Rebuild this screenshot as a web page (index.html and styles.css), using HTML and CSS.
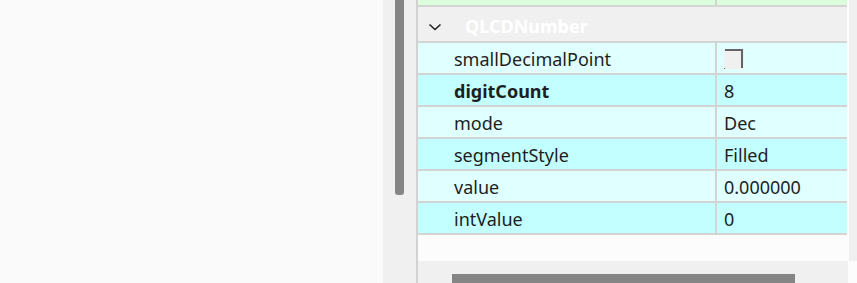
FILE: index.html
```html
<!DOCTYPE html>
<html lang="en">

<head>
	<meta charset="UTF-8">
	<title>Property Editor</title>
	<link rel="stylesheet" href="styles.css">
</head>

<body>
	<div class="page">
		<div class="canvas"></div>
		<div class="vtrack">
			<span class="vthumb"></span>
		</div>
		<div class="panel">
			<div class="panel-top">
				<div class="props">
					<div class="row green"><span class="key"></span><span class="val"></span></div>
					<div class="group">
						<svg class="chev" width="14" height="8" viewBox="0 0 14 8">
							<path d="M1.5 1.5 L7 6.5 L12.5 1.5" fill="none" stroke="#222" stroke-width="1.6" />
						</svg>
						<span>QLCDNumber</span>
					</div>
					<div class="row light"><span class="key">smallDecimalPoint</span><span class="val">
						<svg class="check" width="20" height="20" viewBox="0 0 20 20">
							<rect x="0" y="0" width="20" height="20" fill="#f0f0f0" />
							<path d="M1 1 H18 V19" fill="none" stroke="#646464" stroke-width="2" />
							<rect x="0" y="19" width="1" height="1" fill="#646464" />
						</svg>
					</span></div>
					<div class="row dark"><span class="key bold">digitCount</span><span class="val">8</span></div>
					<div class="row light"><span class="key">mode</span><span class="val">Dec</span></div>
					<div class="row dark"><span class="key">segmentStyle</span><span class="val">Filled</span></div>
					<div class="row light"><span class="key">value</span><span class="val">0.000000</span></div>
					<div class="row dark"><span class="key">intValue</span><span class="val">0</span></div>
				</div>
				<div class="side"></div>
			</div>
			<div class="htrack">
				<span class="hthumb"></span>
			</div>
		</div>
	</div>
</body>

</html>
```

FILE: styles.css
```css
* {
	margin: 0;
	padding: 0;
	box-sizing: border-box;
}

body {
	background: #fcfcfc;
	font-family: "Noto Sans", "Open Sans", sans-serif;
	font-size: 18px;
	color: #1e1e1e;
	overflow: hidden;
}

.page {
	display: flex;
	height: 283px;
}

.canvas {
	width: 383px;
	background: #fafafa;
}

.vtrack {
	width: 35px;
	background: #f0f0f0;
	border-right: 2px solid #d2d2d2;
	padding-left: 12px;
}
.vtrack .vthumb {
	display: block;
	width: 9px;
	height: 195px;
	background: #858585;
	border-radius: 0 0 3px 3px;
}

.panel {
	width: 439px;
	flex: 1;
	display: flex;
	flex-direction: column;
}

.panel-top {
	display: flex;
	height: 264px;
}

.props {
	width: 429px;
	display: flex;
	flex-direction: column;
	gap: 2px;
	align-self: flex-start;
	background: #d4d4d4;
	padding-bottom: 2px;
}

.side {
	width: 8px;
	margin-left: 2px;
	background: #f0f0f0;
}

.row {
	display: grid;
	grid-template-columns: 297px 130px;
	column-gap: 2px;
	height: 30px;
}
.row span {
	display: flex;
	align-items: center;
	white-space: nowrap;
	padding-top: 2px;
}
.row .key {
	padding-left: 36px;
}
.row .val {
	padding-left: 7px;
}
.row .bold {
	font-weight: bold;
}

.green {
	height: 5px;
}
.green span {
	background: #ddfedd;
	padding-top: 0;
}
.light span {
	background: #e0ffff;
}
.dark span {
	background: #c4ffff;
}

.group {
	height: 34px;
	background: #f0f0f0;
	display: flex;
	align-items: center;
	padding-top: 3px;
	color: #fff;
	font-weight: bold;
}
.group .chev {
	margin-left: 10px;
	margin-right: 23px;
	margin-top: 2px;
}

.check {
	display: block;
}

.htrack {
	flex: 1;
	width: 430px;
	background: #f0f0f0;
	padding: 13px 0 0 34px;
}
.htrack .hthumb {
	display: block;
	width: 343px;
	height: 9px;
	background: #858585;
}
```
